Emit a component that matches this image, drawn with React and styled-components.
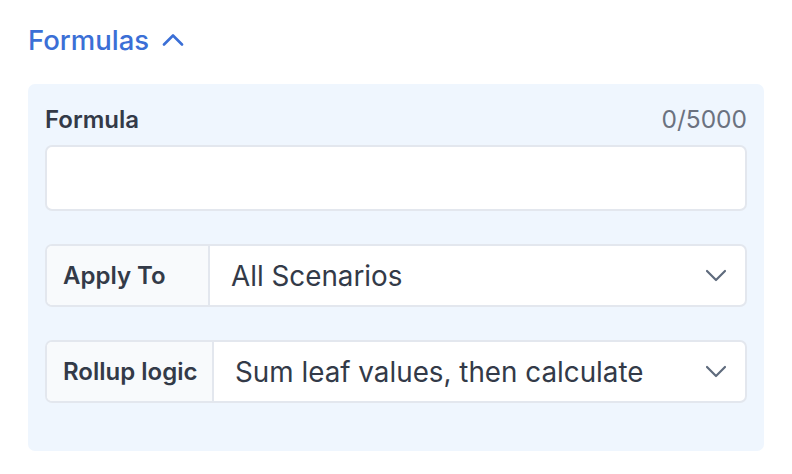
import React from "react";
import styled, { createGlobalStyle } from "styled-components";

const GlobalStyle = createGlobalStyle`
	html, body {
		margin: 0;
		padding: 0;
		background: #ffffff;
		font-family: Inter, "Noto Sans", sans-serif;
	}
`;

const Page = styled.div`
	width: 792px;
	height: 474px;
	padding: 22px 28px 0 28px;
	box-sizing: border-box;
`;

const SectionToggle = styled.button`
	display: flex;
	align-items: center;
	gap: 13px;
	border: none;
	background: none;
	padding: 0 0 0 0;
	margin: 0;
	font-family: inherit;
	font-size: 27.5px;
	font-weight: 500;
	color: #3b6fd6;
	line-height: 36px;
	cursor: pointer;
`;

const Panel = styled.div`
	margin-top: 26px;
	background-color: #eff6fe;
	border-radius: 7px;
	padding: 20px 17px 48px 17px;
	display: flex;
	flex-direction: column;
`;

const FieldHeader = styled.div`
	display: flex;
	justify-content: space-between;
	align-items: center;
	height: 30px;
	margin-bottom: 11px;
`;

const FieldLabel = styled.label`
	font-size: 24px;
	font-weight: 600;
	color: #333a48;
`;

const Counter = styled.span`
	font-size: 24.5px;
	color: #6b7280;
`;

const TextBox = styled.div`
	height: 66px;
	box-sizing: border-box;
	background: #ffffff;
	border: 2px solid #e3e7ee;
	border-radius: 7px;
`;

const SelectGroup = styled.div`
	display: flex;
	height: 63px;
	box-sizing: border-box;
	margin-top: ${(props) => props.$top};
	border: 2px solid #e3e7ee;
	border-radius: 7px;
	overflow: hidden;
	background: #ffffff;
`;

const Addon = styled.div`
	width: ${(props) => props.$width};
	flex-shrink: 0;
	display: flex;
	align-items: center;
	padding-left: 16px;
	box-sizing: border-box;
	background: #f8fafc;
	border-right: 2px solid #e3e7ee;
	font-size: 24px;
	font-weight: 600;
	color: #333a48;
`;

const SelectValue = styled.div`
	flex: 1;
	display: flex;
	align-items: center;
	justify-content: space-between;
	padding: 0 18px 0 21px;
	font-size: 27.8px;
	color: #333a48;
`;

const ChevronDown = () => (
	<svg width="22" height="13" viewBox="0 0 22 13" fill="none" stroke="#5f6b7d" strokeWidth="2.2" strokeLinecap="round" strokeLinejoin="round">
		<path d="M2 2l9 9 9-9" />
	</svg>
);

const ChevronUp = () => (
	<svg width="22" height="12" viewBox="0 0 22 12" fill="none" stroke="#3b6fd6" strokeWidth="2.6" strokeLinecap="round" strokeLinejoin="round">
		<path d="M2 10.5l9-9 9 9" />
	</svg>
);

const App = () => {
	return (
		<>
			<GlobalStyle />
			<Page>
				<SectionToggle>
					Formulas
					<ChevronUp />
				</SectionToggle>
				<Panel>
					<FieldHeader>
						<FieldLabel>Formula</FieldLabel>
						<Counter>0/5000</Counter>
					</FieldHeader>
					<TextBox />
					<SelectGroup $top="33px">
						<Addon $width="163px">Apply To</Addon>
						<SelectValue>
							All Scenarios
							<ChevronDown />
						</SelectValue>
					</SelectGroup>
					<SelectGroup $top="33px">
						<Addon $width="167px">Rollup logic</Addon>
						<SelectValue>
							Sum leaf values, then calculate
							<ChevronDown />
						</SelectValue>
					</SelectGroup>
				</Panel>
			</Page>
		</>
	);
};

export default App;
